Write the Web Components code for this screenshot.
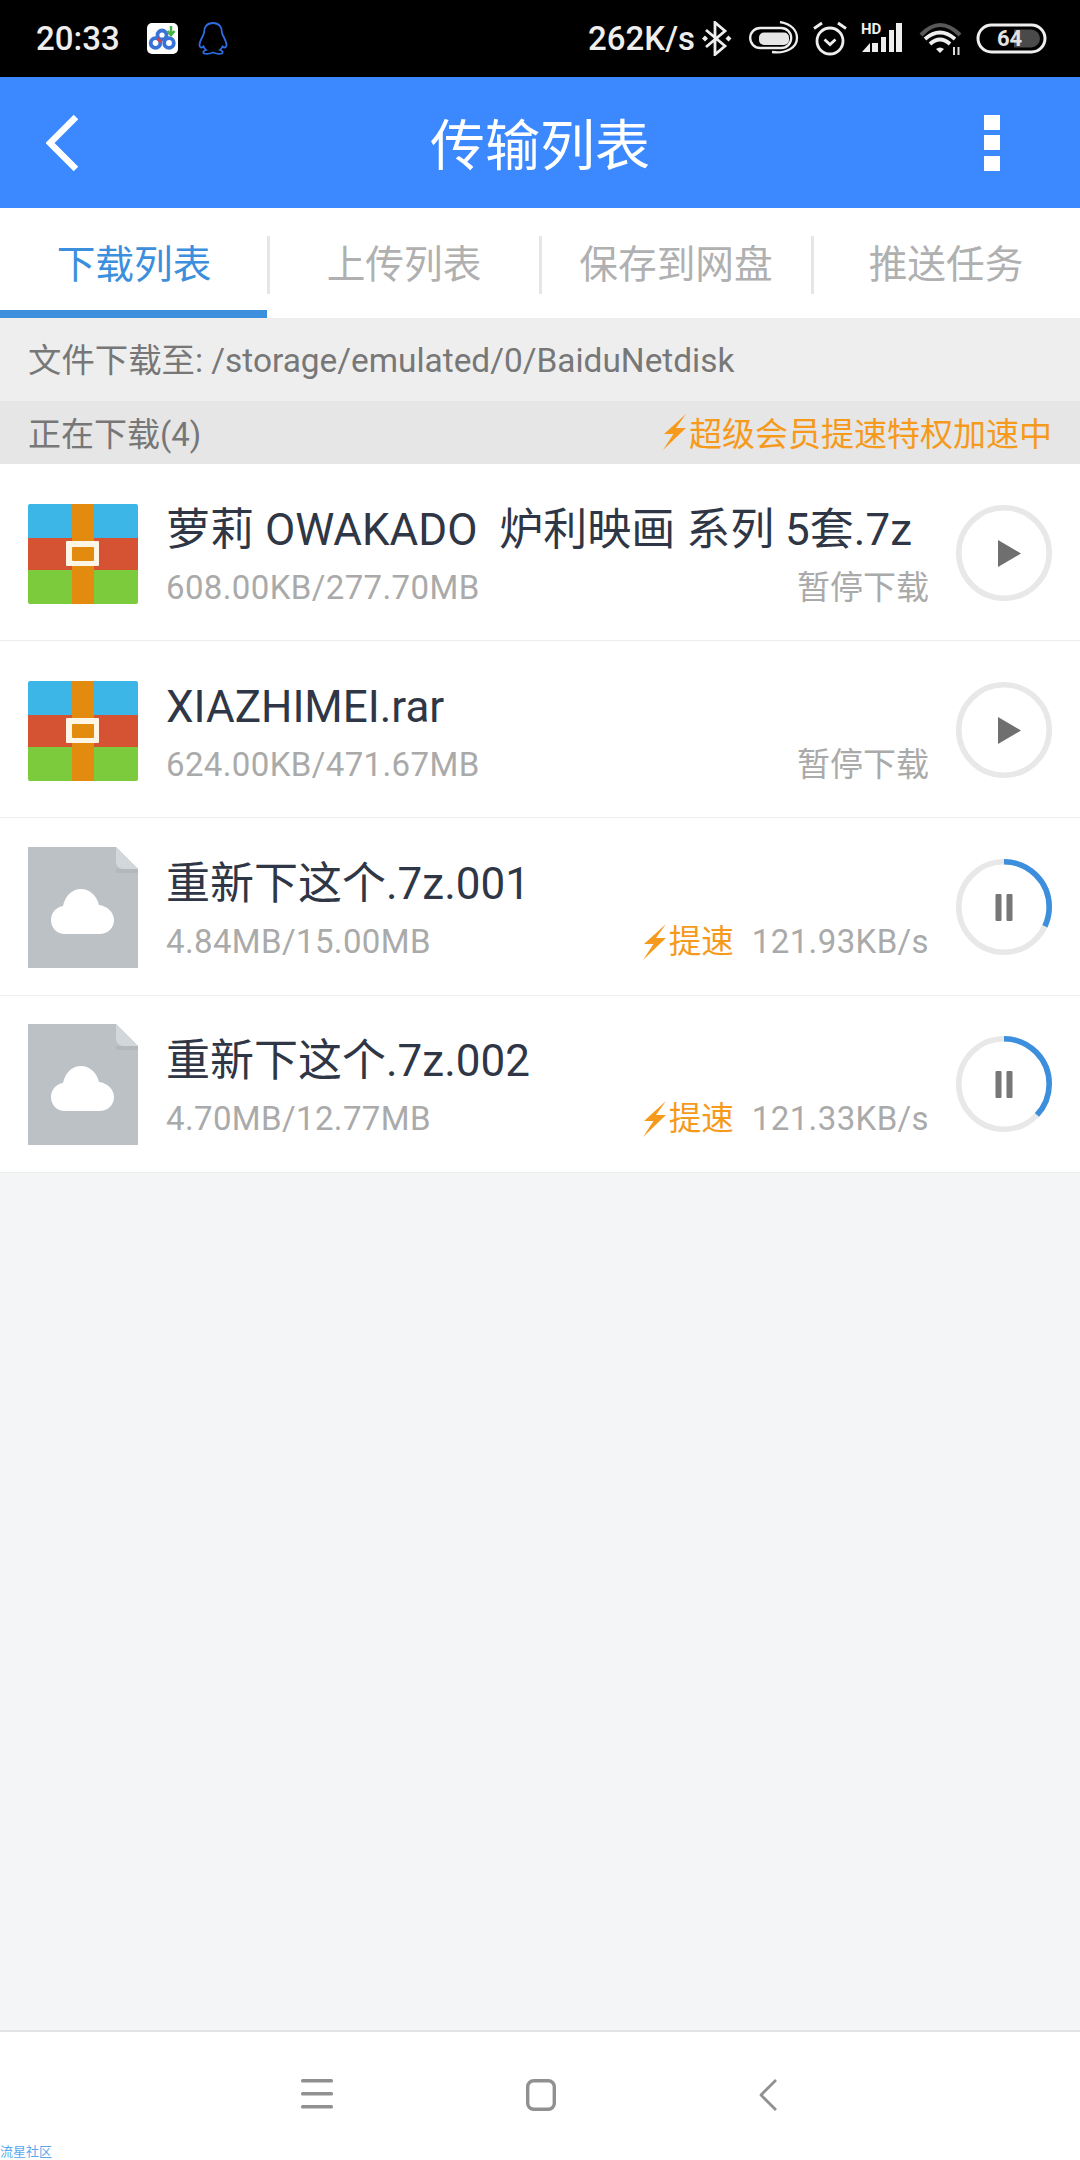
<!DOCTYPE html>
<html lang="zh">
<head>
<meta charset="utf-8">
<title>传输列表</title>
<style>
html, body { margin: 0; padding: 0; background: #f4f5f7; }
body { font-family: Roboto, "Noto Sans CJK SC", sans-serif; }
</style>
</head>
<body>
<transfer-app>
  <status-bar></status-bar>
  <title-bar>传输列表</title-bar>
  <tab-strip>
    <tab-item active>下载列表</tab-item>
    <tab-item>上传列表</tab-item>
    <tab-item>保存到网盘</tab-item>
    <tab-item last>推送任务</tab-item>
  </tab-strip>
  <path-bar>文件下载至: /storage/emulated/0/BaiduNetdisk</path-bar>
  <section-head>
    正在下载(4)
    <span slot="promo">超级会员提速特权加速中</span>
  </section-head>
  <task-row kind="rar" state="paused" name="萝莉 OWAKADO&nbsp; 炉利映画 系列 5套.7z" size="608.00KB/277.70MB"></task-row>
  <task-row kind="rar" state="paused" name="XIAZHIMEI.rar" size="624.00KB/471.67MB"></task-row>
  <task-row kind="cloud" state="running" progress="32" speed="121.93KB/s" name="重新下这个.7z.001" size="4.84MB/15.00MB"></task-row>
  <task-row kind="cloud" state="running" progress="37" speed="121.33KB/s" name="重新下这个.7z.002" size="4.70MB/12.77MB"></task-row>
  <nav-keys slot="foot"></nav-keys>
</transfer-app>

<script>
class TransferApp extends HTMLElement {
  constructor() {
    super();
    this.attachShadow({mode: 'open'}).innerHTML = `
      <style>
        :host { display: flex; flex-direction: column; height: 2160px; background: #f4f5f7; overflow: hidden; position: relative; }
        main { flex: 1; display: block; }
      </style>
      <main><slot></slot></main>
      <slot name="foot"></slot>`;
  }
}

class StatusBar extends HTMLElement {
  constructor() {
    super();
    this.attachShadow({mode: 'open'}).innerHTML = `
      <style>
        :host { display: flex; align-items: center; height: 77px; background: #000; color: #eee; padding: 0 33px 0 36px; box-sizing: border-box; font: 500 33px Roboto, sans-serif; }
        .left, .right { display: flex; align-items: center; }
        .right { margin-left: auto; }
        svg { display: block; flex: none; }
        .time { width: 92px; }
        text { font-family: Roboto, sans-serif; font-weight: 700; }
      </style>
      <div class="left">
        <span class="time">20:33</span>
        <svg style="margin-left:19px" width="31" height="31" viewBox="0 0 31 31">
          <rect width="31" height="31" rx="5" fill="#fff"/>
          <circle cx="8.500" cy="20" r="4.800" fill="none" stroke="#3a73d8" stroke-width="3.800"/>
          <circle cx="22" cy="20" r="4.800" fill="none" stroke="#3a73d8" stroke-width="3.800"/>
          <circle cx="15" cy="12" r="4.500" fill="none" stroke="#3a73d8" stroke-width="3.800"/>
          <path d="M10.500 15.500l3.500 3.500" stroke="#d4424a" stroke-width="3"/>
          <path d="M24 3v8M20.500 8l3.500 4 3.500-4" fill="none" stroke="#46b04a" stroke-width="2.500"/>
        </svg>
        <svg style="margin-left:20px" width="30" height="33" viewBox="0 0 30 33" fill="none" stroke="#2f6be0" stroke-width="1.800">
          <path d="M15 1c-6.500 0-9 4.500-9 9.500 0 3-4.500 7.500-4.500 12.500 0 3 2 3 4 1.500 .5 1.500 1.500 2.500 2.500 3.500-2 .5-3.500 2-2 3.500 3 .8 6 .3 9-1 3 1.300 6 1.800 9 1 1.500-1.500 0-3-2-3.500 1-1 2-2 2.500-3.500 2 1.500 4 1.500 4-1.500 0-5-4.500-9.500-4.500-12.500 0-5-2.500-9.500-9-9.500z"/>
        </svg>
      </div>
      <div class="right">
        <span>262K/s</span>
        <svg style="margin-left:7px" width="30" height="35" viewBox="0 0 30 35" fill="none" stroke="#eee" stroke-width="2.800">
          <path d="M4 9l19 16-10 8.500V1.500L23 10 4 26"/>
          <path d="M3 14.500l3 3-3 3-3-3zM26.500 14.500l3 3-3 3-3-3z" fill="#eee" stroke="none"/>
        </svg>
        <svg style="margin-left:17px" width="50" height="35" viewBox="0 0 50 35" fill="none" stroke="#eee" stroke-width="2.300">
          <rect x="1.200" y="7" width="41" height="20" rx="10"/>
          <rect x="10" y="11.500" width="30" height="12.500" rx="5" fill="#e6e6e6" stroke="none"/>
          <path d="M31 1C42 3 48 9 48 17c0 9-10 16-25 14"/>
        </svg>
        <svg style="margin-left:13px" width="36" height="35" viewBox="0 0 36 35" fill="none" stroke="#eee" stroke-width="2.800">
          <circle cx="18" cy="20" r="13"/>
          <path d="M12.500 18.500l5.500 5 5.500-5M2 7.500l8-5.500M34 7.500l-8-5.500"/>
        </svg>
        <svg style="margin:0 0 3px 12px" width="44" height="36" viewBox="0 -3 44 36">
          <text x="1" y="12" font-size="15" fill="#eee">HD</text>
          <path fill="#eee" d="M2 30l8-9v9zM12 21h6v9h-6zM21 15h5v15h-5zM29 8h5v22h-5zM36 1h6v29h-6z"/>
        </svg>
        <svg style="margin-left:15px" width="44" height="35" viewBox="0 0 44 35" fill="none">
          <path d="M2 14Q21-6 41 14" stroke="#585858" stroke-width="4.200"/>
          <path d="M6 18Q21 5 36 18M11 23Q21 14 31 23" stroke="#eee" stroke-width="3.800"/>
          <path d="M17 28q4-3 8 0l-4 4z" fill="#eee"/>
          <path d="M35 34v-8M39.500 34v-8" stroke="#ddd" stroke-width="2"/>
        </svg>
        <svg style="margin-left:13px" width="71" height="31" viewBox="0 0 71 31">
          <rect x="2" y="2" width="67" height="27" rx="13.500" fill="none" stroke="#eee" stroke-width="3"/>
          <path d="M38 6.500h17a9 9 0 0 1 0 18H38z" fill="#4a4a4a"/>
          <text x="21" y="23" font-size="22" fill="#e2e2e2">64</text>
        </svg>
      </div>`;
  }
}

class TitleBar extends HTMLElement {
  constructor() {
    super();
    this.attachShadow({mode: 'open'}).innerHTML = `
      <style>
        :host { display: flex; align-items: center; justify-content: space-between; height: 131px; background: #3b88ff; color: #fff; padding: 0 80px 0 46px; box-sizing: border-box; font: 55px "Noto Sans CJK SC", sans-serif; }
        svg { display: block; }
        h1 { margin: -3px 0 0; font: inherit; position: absolute; left: 0; right: 0; text-align: center; pointer-events: none; }
      </style>
      <svg width="32" height="58" viewBox="0 0 32 58" fill="none" stroke="#fff" stroke-width="6.500"><path d="M30 3L4 29l26 26"/></svg>
      <h1><slot></slot></h1>
      <svg width="16" height="56" viewBox="0 0 16 56" fill="#fff"><rect width="16" height="15"/><rect y="20" width="16" height="15"/><rect y="41" width="16" height="15"/></svg>`;
  }
}

class TabStrip extends HTMLElement {
  constructor() {
    super();
    this.attachShadow({mode: 'open'}).innerHTML = `
      <style>
        :host { display: grid; grid-template-columns: 268px 272px 272px 268px; height: 110px; background: #fff; }
      </style>
      <slot></slot>`;
  }
}

class TabItem extends HTMLElement {
  constructor() {
    super();
    this.attachShadow({mode: 'open'}).innerHTML = `
      <style>
        :host { display: flex; align-items: center; justify-content: center; position: relative; box-sizing: border-box; padding-bottom: 5px; color: #b0b0b0; font: 38.700px "Noto Sans CJK SC", sans-serif; }
        :host([active]) { color: #3c8fdc; }
        :host([active])::after { content: ''; position: absolute; left: 0; right: 1px; bottom: 0; height: 8px; background: #3c8fdc; }
        :host(:not([last]))::before { content: ''; position: absolute; right: -1.500px; top: 28px; height: 58px; width: 3px; background: #e6e6e6; }
      </style>
      <slot></slot>`;
  }
}

class PathBar extends HTMLElement {
  constructor() {
    super();
    this.attachShadow({mode: 'open'}).innerHTML = `
      <style>
        :host { display: flex; align-items: center; box-sizing: border-box; height: 83px; padding: 0 0 4px 28px; background: #eee; color: #777; font: 33.400px Roboto, "Noto Sans CJK SC", sans-serif; }
      </style>
      <slot></slot>`;
  }
}

class BoltIcon extends HTMLElement {
  constructor() {
    super();
    this.attachShadow({mode: 'open'}).innerHTML = `
      <style>
        :host { display: inline-block; width: 26px; height: 36px; line-height: 0; flex: none; }
      </style>
      <svg width="26" height="36" viewBox="0 0 26 36"><path fill="#f59a1c" d="M23 0L1 20h9.500L0 36l23-22H13z"/></svg>`;
  }
}

class SectionHead extends HTMLElement {
  constructor() {
    super();
    this.attachShadow({mode: 'open'}).innerHTML = `
      <style>
        :host { display: flex; align-items: center; justify-content: space-between; box-sizing: border-box; height: 63px; padding: 0 28px 2px 28px; background: #e6e6e6; color: #777; font: 33px Roboto, "Noto Sans CJK SC", sans-serif; }
        .promo { display: flex; align-items: center; color: #f59a1c; }
      </style>
      <span><slot></slot></span>
      <span class="promo"><bolt-icon></bolt-icon><slot name="promo"></slot></span>`;
  }
}

class FileThumb extends HTMLElement {
  constructor() {
    super();
    const isRar = this.getAttribute('kind') === 'rar';
    const rar = `
      <svg width="110" height="100" viewBox="0 0 110 100">
        <path fill="#3cb6e6" d="M2 0h106a2 2 0 0 1 2 2v32H0V2a2 2 0 0 1 2-2z"/>
        <rect y="34" width="110" height="32" fill="#d55233"/>
        <path fill="#7bcb3c" d="M0 66h110v32a2 2 0 0 1-2 2H2a2 2 0 0 1-2-2z"/>
        <rect x="44" width="22" height="100" fill="#e28b0f"/>
        <rect x="38" y="37" width="33" height="25" rx="1" fill="#fdf6e6"/>
        <rect x="44" y="43" width="22" height="14" rx="1" fill="#e28b0f"/>
      </svg>`;
    const cloud = `
      <svg width="110" height="121" viewBox="0 0 110 121">
        <path fill="#bcc1c6" d="M0 0h88l22 22v99H0z"/>
        <rect x="88" y="22" width="22" height="4" fill="#b3b8bd"/>
        <path fill="#d2d7da" d="M88 0l22 22H96c-5 0-8-3-8-8z"/>
        <path fill="#fff" d="M37 87C28 87 23 80 23 73c0-7 5-13 12-14C37 49 44 42 53 42s16 7 18 16c8 1 15 7 15 15 0 8-6 14-15 14z"/>
      </svg>`;
    this.attachShadow({mode: 'open'}).innerHTML = `
      <style>
        :host { display: flex; align-items: center; width: 110px; flex: none; margin-top: ${isRar ? 4 : 2}px; }
        svg { display: block; }
      </style>
      ${isRar ? rar : cloud}`;
  }
}

class TaskControl extends HTMLElement {
  constructor() {
    super();
    const running = this.getAttribute('state') === 'running';
    const glyph = running
      ? '<rect x="39.500" y="35" width="6" height="27" rx="1" fill="#777"/><rect x="50.500" y="35" width="6" height="27" rx="1" fill="#777"/>'
      : '<path d="M42 35l23 13.500L42 62z" fill="#6f6f6f"/>';
    const arc = running
      ? `<circle cx="48" cy="48" r="45.200" fill="none" stroke="#3c8fdc" stroke-width="5.600" pathLength="100" stroke-dasharray="${this.getAttribute('progress')} 100" transform="rotate(-90 48 48)"/>`
      : '';
    this.attachShadow({mode: 'open'}).innerHTML = `
      <style>
        :host { display: block; width: 96px; height: 96px; flex: none; margin-top: 1px; }
        svg { display: block; }
      </style>
      <svg width="96" height="96" viewBox="0 0 96 96">
        <circle cx="48" cy="48" r="45.200" fill="none" stroke="#e8e8e8" stroke-width="5.600"/>
        ${arc}
        ${glyph}
      </svg>`;
  }
}

class TaskRow extends HTMLElement {
  constructor() {
    super();
    const running = this.getAttribute('state') === 'running';
    const status = running
      ? `<span class="boost"><bolt-icon></bolt-icon>提速</span><span class="speed">${this.getAttribute('speed')}</span>`
      : '<span class="paused">暂停下载</span>';
    this.attachShadow({mode: 'open'}).innerHTML = `
      <style>
        :host { display: flex; align-items: center; gap: 28px; height: 177.200px; padding: 0 28px; box-sizing: border-box; background: #fff; border-bottom: 1.500px solid #eceded; }
        .body { flex: 1; min-width: 0; display: flex; flex-direction: column; gap: 7px; padding-top: 6px; }
        .name { color: #2f3645; font: 44px/58px Roboto, "Noto Sans CJK SC", sans-serif; white-space: nowrap; }
        .meta { display: flex; align-items: center; color: #aaa; font: 33px/44px Roboto, "Noto Sans CJK SC", sans-serif; letter-spacing: .38px; }
        .status { margin-left: auto; display: flex; align-items: center; margin-right: -1px; }
        .paused { letter-spacing: 0; }
        .boost { display: flex; align-items: center; color: #f59a1c; font-size: 32.500px; letter-spacing: 0; }
        .speed { margin-left: 18px; }
      </style>
      <file-thumb kind="${this.getAttribute('kind')}"></file-thumb>
      <div class="body">
        <div class="name">${this.getAttribute('name')}</div>
        <div class="meta"><span>${this.getAttribute('size')}</span><span class="status">${status}</span></div>
      </div>
      <task-control state="${this.getAttribute('state')}" progress="${this.getAttribute('progress') || 0}"></task-control>`;
  }
}

class NavKeys extends HTMLElement {
  constructor() {
    super();
    this.attachShadow({mode: 'open'}).innerHTML = `
      <style>
        :host { display: flex; align-items: flex-start; justify-content: center; height: 130px; box-sizing: border-box; padding: 47px 0 0 0; background: #fff; border-top: 2px solid #e3e3e3; position: relative; }
        .keys { display: flex; gap: 193px; margin-left: -3px; }
        svg { display: block; }
        .back { margin-left: 10px; }
        .mark { position: absolute; left: 0; bottom: 3px; color: #5aa9ee; font: 13px/13px "Noto Sans CJK SC", sans-serif; }
      </style>
      <div class="keys">
        <svg width="32" height="30" viewBox="0 0 32 30" fill="#909090"><rect width="32" height="3.500" rx="1.500"/><rect y="13" width="32" height="3.500" rx="1.500"/><rect y="26" width="32" height="3.500" rx="1.500"/></svg>
        <svg width="30" height="32" viewBox="0 0 30 32" fill="none" stroke="#909090" stroke-width="3.400"><rect x="1.700" y="1.700" width="26.600" height="28.600" rx="6"/></svg>
        <svg class="back" width="18" height="32" viewBox="0 0 18 32" fill="none" stroke="#909090" stroke-width="2.800" stroke-linejoin="round"><path d="M17 1L2 16l15 15"/></svg>
      </div>
      <span class="mark">流星社区</span>`;
  }
}

customElements.define('transfer-app', TransferApp);
customElements.define('status-bar', StatusBar);
customElements.define('title-bar', TitleBar);
customElements.define('tab-strip', TabStrip);
customElements.define('tab-item', TabItem);
customElements.define('path-bar', PathBar);
customElements.define('bolt-icon', BoltIcon);
customElements.define('section-head', SectionHead);
customElements.define('file-thumb', FileThumb);
customElements.define('task-control', TaskControl);
customElements.define('task-row', TaskRow);
customElements.define('nav-keys', NavKeys);
</script>
</body>
</html>
